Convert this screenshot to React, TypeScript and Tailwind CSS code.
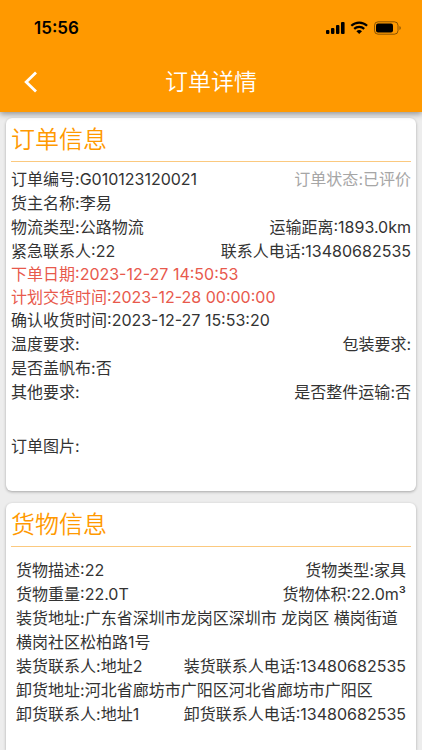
import type { ReactNode } from "react";

type Field = { label: string; value?: string; className?: string };

const orderNo: Field = { label: "订单编号", value: "G010123120021" };

const dates: Field[] = [
  { label: "下单日期", value: "2023-12-27 14:50:53", className: "text-[#e8594c]" },
  { label: "计划交货时间", value: "2023-12-28 00:00:00", className: "text-[#e8594c]" },
  { label: "确认收货时间", value: "2023-12-27 15:53:20" },
];

function Item({ label, value = "", className = "" }: Field) {
  return (
    <p className={className}>
      {label}:{value}
    </p>
  );
}

function Row({ left, right }: { left: Field; right?: Field }) {
  return (
    <div className="flex justify-between">
      <Item {...left} />
      {right && <Item {...right} />}
    </div>
  );
}

function Card({
  title,
  className,
  children,
}: {
  title: string;
  className: string;
  children: ReactNode;
}) {
  return (
    <section
      className={`bg-white px-[5px] pt-1 shadow-[0_1px_3px_rgba(0,0,0,0.3)] ${className}`}
    >
      <h2 className="border-b border-[#fbc97f] pb-[3px] text-2xl leading-9 font-[350] text-[#ff9900]">
        {title}
      </h2>
      {children}
    </section>
  );
}

function StatusIcons() {
  return (
    <svg width="76" height="14" viewBox="0 0 76 14" fill="none" aria-hidden="true">
      {/* signal */}
      <g fill="#000">
        <rect x="0" y="9" width="3.4" height="4" rx="1" />
        <rect x="5" y="7" width="3.4" height="6" rx="1" />
        <rect x="10" y="4" width="3.4" height="9" rx="1" />
        <rect x="15" y="1" width="3.6" height="12" rx="1" />
      </g>
      {/* wifi */}
      <g stroke="#000" strokeWidth="2.2">
        <path d="M25.3 4.8a11.3 11.3 0 0 1 15.8 0" />
        <path d="M28.2 7.9a7.2 7.2 0 0 1 10 0" />
      </g>
      <path d="M30.4 10.3a4 4 0 0 1 5.6 0L33.2 13z" fill="#000" />
      {/* battery */}
      <rect x="48.5" y="0.8" width="23.5" height="12.4" rx="3.6" stroke="#000" strokeOpacity="0.45" />
      <rect x="50" y="2.5" width="17" height="9" rx="2" fill="#000" />
      <path d="M73.5 5v4c1.7-.6 1.7-3.4 0-4z" fill="#000" fillOpacity="0.5" />
    </svg>
  );
}

export default function App() {
  return (
    <div className="flex min-h-screen flex-col bg-[#ededed] font-['Inter','Noto_Sans_CJK_SC',sans-serif] text-base leading-6 text-[#333333]">
      <header className="relative bg-[#ff9900] shadow-[0_2px_6px_rgba(0,0,0,0.4)]">
        <div className="flex items-center justify-between pt-4 pr-5 pl-[34px]">
          <span className="text-[17px] font-semibold text-black">15:56</span>
          <StatusIcons />
        </div>
        <div className="grid grid-cols-[48px_1fr_48px] items-center pt-[18px] pb-1.5 text-white">
          <button type="button" aria-label="返回" className="flex h-12 items-center pl-6">
            <svg width="14" height="22" viewBox="0 0 14 22" fill="none" aria-hidden="true">
              <path d="M12 1.5 2.2 11 12 20.5" stroke="currentColor" strokeWidth="2.8" />
            </svg>
          </button>
          <h1 className="text-center text-[23px] leading-8 font-[350]">订单详情</h1>
        </div>
      </header>

      <main className="flex grow flex-col gap-3 px-1.5 pt-1.5">
        <Card title="订单信息" className="rounded-md pb-[33px]">
          <div className="pt-[5px]">
            <Row
              left={orderNo}
              right={{ label: "订单状态", value: "已评价", className: "text-[#a6a6a6]" }}
            />
            <Row left={{ label: "货主名称", value: "李易" }} />
            <Row
              left={{ label: "物流类型", value: "公路物流" }}
              right={{ label: "运输距离", value: "1893.0km" }}
            />
            <Row
              left={{ label: "紧急联系人", value: "22" }}
              right={{ label: "联系人电话", value: "13480682535" }}
            />
            <div className="leading-[23px]">
              {dates.map((d) => (
                <Item key={d.label} {...d} />
              ))}
            </div>
            <Row left={{ label: "温度要求" }} right={{ label: "包装要求" }} />
            <Row left={{ label: "是否盖帆布", value: "否" }} />
            <Row
              left={{ label: "其他要求" }}
              right={{ label: "是否整件运输", value: "否" }}
            />
          </div>
          <div className="pt-[30px]">
            <Item label="订单图片" />
          </div>
        </Card>

        <Card title="货物信息" className="grow rounded-t-md pb-6">
          <div className="px-[5px] pt-[11px]">
            <Row
              left={{ label: "货物描述", value: "22" }}
              right={{ label: "货物类型", value: "家具" }}
            />
            <Row
              left={{ label: "货物重量", value: "22.0T" }}
              right={{ label: "货物体积", value: "22.0m³" }}
            />
            <Item
              label="装货地址"
              value="广东省深圳市龙岗区深圳市 龙岗区 横岗街道横岗社区松柏路1号"
            />
            <Row
              left={{ label: "装货联系人", value: "地址2" }}
              right={{ label: "装货联系人电话", value: "13480682535" }}
            />
            <Item label="卸货地址" value="河北省廊坊市广阳区河北省廊坊市广阳区" />
            <Row
              left={{ label: "卸货联系人", value: "地址1" }}
              right={{ label: "卸货联系人电话", value: "13480682535" }}
            />
          </div>
        </Card>
      </main>
    </div>
  );
}
